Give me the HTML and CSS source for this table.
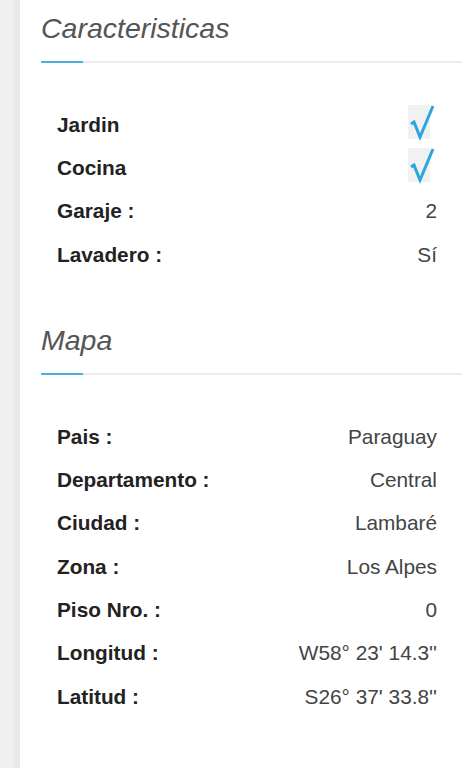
FILE: index.html
```html
<!DOCTYPE html>
<html lang="es">
<head>
<meta charset="utf-8">
<link rel="stylesheet" href="styles.css">
</head>
<body>
<div class="strip"></div>
<main class="content">
  <section class="section">
    <h2 class="title">Caracteristicas</h2>
    <div class="rule"><span class="rule-accent"></span></div>
    <ul class="list">
      <li class="row"><span class="label">Jardin</span><span class="check"><svg width="22" height="34" viewBox="0 0 22 34"><polyline points="3,19 6,17 12,32 25,1" fill="none" stroke="#2aa6df" stroke-width="3" stroke-linejoin="miter"/></svg></span></li>
      <li class="row"><span class="label">Cocina</span><span class="check"><svg width="22" height="34" viewBox="0 0 22 34"><polyline points="3,19 6,17 12,32 25,1" fill="none" stroke="#2aa6df" stroke-width="3" stroke-linejoin="miter"/></svg></span></li>
      <li class="row"><span class="label">Garaje :</span><span class="value">2</span></li>
      <li class="row"><span class="label">Lavadero :</span><span class="value">Sí</span></li>
    </ul>
  </section>
  <section class="section">
    <h2 class="title">Mapa</h2>
    <div class="rule"><span class="rule-accent"></span></div>
    <ul class="list">
      <li class="row"><span class="label">Pais :</span><span class="value">Paraguay</span></li>
      <li class="row"><span class="label">Departamento :</span><span class="value">Central</span></li>
      <li class="row"><span class="label">Ciudad :</span><span class="value">Lambaré</span></li>
      <li class="row"><span class="label">Zona :</span><span class="value">Los Alpes</span></li>
      <li class="row"><span class="label">Piso Nro. :</span><span class="value">0</span></li>
      <li class="row"><span class="label">Longitud :</span><span class="value">W58° 23' 14.3''</span></li>
      <li class="row"><span class="label">Latitud :</span><span class="value">S26° 37' 33.8''</span></li>
    </ul>
  </section>
</main>
</body>
</html>
```
FILE: styles.css
```css
html, body {
  margin: 0;
  padding: 0;
  background: #fff;
  height: 100%;
}
body {
  display: flex;
  font-family: "Liberation Sans", Arial, sans-serif;
  color: #222;
  overflow: hidden;
}
.strip {
  width: 20px;
  flex: none;
  background: linear-gradient(to right, #f0f0f0 0, #f0f0f0 13px, #e9e9e9 13px, #e9e9e9 20px);
}
.content {
  flex: 1;
  padding: 0 6px 0 21px;
}
.section {
  display: flex;
  flex-direction: column;
}
.title {
  margin: 8px 0 0;
  font-size: 28.5px;
  font-weight: normal;
  font-style: italic;
  color: #555;
  line-height: 40px;
}
.rule {
  margin-top: 13px;
  height: 2px;
  background: #ececec;
}
.rule-accent {
  display: block;
  width: 42px;
  height: 2px;
  background: #4aaee0;
}
.list {
  list-style: none;
  margin: 40px 0 0;
  padding: 0 25px 0 16px;
  display: flex;
  flex-direction: column;
}
.row {
  height: 43.3px;
  display: flex;
  align-items: center;
  justify-content: space-between;
  font-size: 20.8px;
}
.label {
  font-weight: bold;
  color: #222;
}
.value {
  color: #444;
}
.check {
  display: block;
  width: 22px;
  height: 34px;
  margin: 0 7px 6px 0;
  background: #f1f1f1;
}
.check svg {
  display: block;
  overflow: visible;
}
.section + .section {
  margin-top: 36px;
}
```
